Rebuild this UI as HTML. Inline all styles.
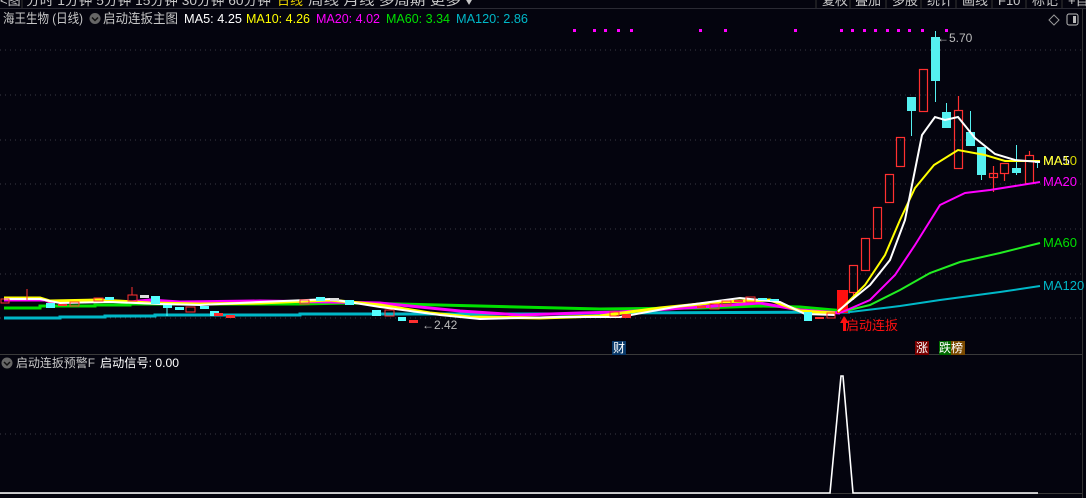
<!DOCTYPE html>
<html><head><meta charset="utf-8"><style>
html,body{margin:0;padding:0;background:#04040e;}
body{width:1086px;height:498px;overflow:hidden;position:relative;font-family:"Liberation Sans","Noto Sans CJK SC",sans-serif;}
</style></head><body>
<svg width="1086" height="498" style="position:absolute;left:0;top:0" xmlns="http://www.w3.org/2000/svg">
<g font-family="Liberation Sans, Noto Sans CJK SC, sans-serif">
<g font-size="13" fill="#c8c8c8">
<text x="0" y="5">&lt;图</text>
<text x="26" y="5" textLength="245" lengthAdjust="spacingAndGlyphs">分时  1分钟  5分钟  15分钟  30分钟  60分钟</text>
<text x="277" y="5" fill="#e8d000">日线</text>
<text x="308" y="5" textLength="165" lengthAdjust="spacingAndGlyphs">周线  月线  多周期  更多 ▾</text>
<text x="822" y="5">复权</text><text x="855" y="5">叠加</text><text x="892" y="5">多股</text><text x="927" y="5">统计</text><text x="962" y="5">画线</text><text x="998" y="5">F10</text><text x="1032" y="5">标记</text><text x="1068" y="5">+自</text>
</g>
<line x1="0" y1="8.5" x2="1086" y2="8.5" stroke="#2a2a33"/>
<g stroke="#333" stroke-width="1"><line x1="22" y1="0" x2="22" y2="8"/><line x1="816" y1="0" x2="816" y2="8"/><line x1="850" y1="0" x2="850" y2="8"/><line x1="886" y1="0" x2="886" y2="8"/><line x1="921" y1="0" x2="921" y2="8"/><line x1="956" y1="0" x2="956" y2="8"/><line x1="992" y1="0" x2="992" y2="8"/><line x1="1026" y1="0" x2="1026" y2="8"/><line x1="1062" y1="0" x2="1062" y2="8"/></g>
<g stroke="#3a3a44" stroke-dasharray="1,4">
<line x1="0" y1="50" x2="1082" y2="50"/><line x1="0" y1="95" x2="1082" y2="95"/><line x1="0" y1="140" x2="1082" y2="140"/><line x1="0" y1="184" x2="1082" y2="184"/><line x1="0" y1="229" x2="1082" y2="229"/><line x1="0" y1="274" x2="1082" y2="274"/><line x1="0" y1="318" x2="1082" y2="318"/><line x1="0" y1="434" x2="1082" y2="434"/>
</g>
<line x1="1082.5" y1="9" x2="1082.5" y2="498" stroke="#333"/>
<line x1="0" y1="354.5" x2="1082" y2="354.5" stroke="#3a3a3a"/>
<line x1="0" y1="493.5" x2="1082" y2="493.5" stroke="#3a3a3a"/>
<text x="3" y="23" font-size="13" fill="#c8c8c8" textLength="80" lengthAdjust="spacingAndGlyphs">海王生物 (日线)</text>
<circle cx="95" cy="18.5" r="5.5" fill="#666"/><path d="M92 17.5 L95 20.5 L98 17.5" stroke="#111" stroke-width="1.5" fill="none"/>
<text x="103" y="23" font-size="13" fill="#c8c8c8" textLength="75" lengthAdjust="spacingAndGlyphs">启动连扳主图</text>
<text x="184" y="23" font-size="13" fill="#ffffff" textLength="58" lengthAdjust="spacingAndGlyphs">MA5: 4.25</text>
<text x="246" y="23" font-size="13" fill="#ffff00" textLength="64" lengthAdjust="spacingAndGlyphs">MA10: 4.26</text>
<text x="316" y="23" font-size="13" fill="#ff00ff" textLength="64" lengthAdjust="spacingAndGlyphs">MA20: 4.02</text>
<text x="386" y="23" font-size="13" fill="#00e000" textLength="64" lengthAdjust="spacingAndGlyphs">MA60: 3.34</text>
<text x="456" y="23" font-size="13" fill="#00b8c8" textLength="72" lengthAdjust="spacingAndGlyphs">MA120: 2.86</text>
<path d="M1054 15 L1059 20 L1054 25 L1049 20 Z" stroke="#999" fill="none"/>
<rect x="1067" y="14" width="11" height="11" rx="2" stroke="#bbb" fill="none"/><rect x="1073" y="16" width="3" height="7" fill="#bbb"/>
<g fill="#ff00ff">
<rect x="573" y="29" width="3" height="3"/><rect x="593" y="29" width="3" height="3"/><rect x="604" y="29" width="3" height="3"/><rect x="617" y="29" width="3" height="3"/><rect x="630" y="29" width="3" height="3"/><rect x="699" y="29" width="3" height="3"/><rect x="724" y="29" width="3" height="3"/><rect x="794" y="29" width="3" height="3"/><rect x="840" y="29" width="3" height="3"/><rect x="851" y="29" width="3" height="3"/><rect x="863" y="29" width="3" height="3"/><rect x="874" y="29" width="3" height="3"/><rect x="886" y="29" width="3" height="3"/><rect x="897" y="29" width="3" height="3"/><rect x="908" y="29" width="3" height="3"/><rect x="921" y="29" width="3" height="3"/><rect x="945" y="29" width="3" height="3"/>
</g>
<g fill="none" stroke-width="3">
<path d="M4 318 L60 318 L60 317 L105 317 L105 316 L155 316 L155 315 L300 315 L300 314 L560 314 L600 313 L850 312" stroke="#00b8c8"/>
<path d="M4 308 L40 308 L40 306 L95 306 L95 305 L130 305 L130 304 L300 304 L350 303 L400 304 L600 309 L700 308 L760 306 L800 307 L845 311" stroke="#00e000"/>
<path d="M4 300 L45 300 L50 302 L100 300 L130 302 L150 300 L180 302 L260 301 L330 302 L380 303 L460 311 L520 315 L580 313 L620 312 L700 307 L760 303 L800 310 L840 313" stroke="#ff00ff"/>
<path d="M4 298 L40 298 L50 301 L100 300 L150 303 L200 304 L260 303 L330 300 L380 305 L430 313 L470 317 L540 318 L600 316 L660 308 L720 302 L770 300 L800 311 L835 313" stroke="#ffff00"/>
<path d="M4 299 L40 299 L60 303 L110 302 L160 304 L200 305 L260 302 L330 299 L380 307 L440 315 L480 319 L560 317 L620 317 L680 306 L740 298 L780 302 L805 314 L835 315" stroke="#ffffff" stroke-width="2"/>
</g>
<g stroke-width="1">
<rect x="1" y="299" width="8" height="4" fill="none" stroke="#ff3030"/>
<line x1="27" y1="289" x2="27" y2="300" stroke="#ff3030"/>
<rect x="46" y="303" width="9" height="5" fill="#5ff"/><rect x="58" y="304" width="9" height="2" fill="#ff3030"/>
<rect x="70" y="302" width="9" height="4" fill="none" stroke="#ff3030"/>
<rect x="94" y="298" width="9" height="3" fill="none" stroke="#ff3030"/>
<rect x="105" y="297" width="9" height="3" fill="#5ff"/>
<rect x="128" y="295" width="9" height="6" fill="none" stroke="#ff3030"/><line x1="132" y1="287" x2="132" y2="295" stroke="#ff3030"/>
<rect x="140" y="295" width="9" height="3" fill="#ddd"/>
<rect x="151" y="296" width="9" height="8" fill="#5ff"/>
<rect x="163" y="305" width="9" height="3" fill="#5ff"/><line x1="167" y1="305" x2="167" y2="316" stroke="#5ff"/>
<rect x="175" y="307" width="9" height="3" fill="#5ff"/>
<rect x="186" y="307" width="9" height="5" fill="none" stroke="#ff3030"/>
<rect x="200" y="306" width="9" height="3" fill="#5ff"/>
<rect x="210" y="311" width="9" height="5" fill="#5ff"/>
<rect x="214" y="313" width="9" height="3" fill="#ff3030"/>
<rect x="226" y="315" width="9" height="3" fill="#ff3030"/>
<rect x="300" y="300" width="9" height="4" fill="none" stroke="#ff3030"/>
<rect x="316" y="297" width="9" height="4" fill="#5ff"/>
<rect x="330" y="298" width="9" height="3" fill="#ddd"/>
<rect x="345" y="300" width="9" height="5" fill="#5ff"/>
<rect x="372" y="310" width="9" height="6" fill="#5ff"/>
<rect x="385" y="310" width="9" height="6" fill="none" stroke="#ff3030"/>
<rect x="398" y="317" width="8" height="4" fill="#5ff"/>
<rect x="409" y="320" width="9" height="3" fill="#ff3030"/>
<text x="422" y="329" font-size="12" fill="#bbb">←2.42</text>
<rect x="610" y="312" width="9" height="4" fill="none" stroke="#ff3030"/>
<rect x="622" y="314" width="9" height="4" fill="#ff3030"/>
<rect x="697" y="306" width="9" height="2" fill="#ff3030"/>
<rect x="710" y="304" width="9" height="5" fill="none" stroke="#ff3030"/>
<rect x="722" y="301" width="9" height="4" fill="none" stroke="#ff3030"/>
<rect x="734" y="300" width="9" height="2" fill="#ff3030"/>
<rect x="746" y="297" width="9" height="5" fill="none" stroke="#ff3030"/>
<rect x="758" y="298" width="9" height="2" fill="#5ff"/>
<rect x="770" y="299" width="9" height="2" fill="#5ff"/>
<rect x="804" y="312" width="8" height="9" fill="#5ff"/>
<rect x="815" y="317" width="9" height="2" fill="#ff3030"/>
<rect x="827" y="313" width="8" height="5" fill="none" stroke="#ff3030"/>
</g>
<g stroke="#ff3030" fill="none" stroke-width="1.2">
<rect x="837" y="290" width="11" height="23" fill="#ff1010" stroke="none"/>
<rect x="849.5" y="265.5" width="8" height="27"/><line x1="853.5" y1="292" x2="853.5" y2="300"/>
<rect x="861.5" y="238.5" width="8" height="32"/>
<rect x="873.5" y="207.5" width="8" height="31"/>
<rect x="885.5" y="174.5" width="8" height="28"/>
<rect x="896.5" y="137.5" width="8" height="29"/>
<rect x="919.5" y="69.5" width="8" height="42"/>
<rect x="954.5" y="110.5" width="8" height="58"/><line x1="958.5" y1="96" x2="958.5" y2="110"/>
<rect x="989.5" y="173.5" width="8" height="4"/><line x1="993.5" y1="166" x2="993.5" y2="192"/>
<rect x="1000.5" y="163.5" width="8" height="10"/><line x1="1004.5" y1="173" x2="1004.5" y2="181"/>
<rect x="1025.5" y="155.5" width="8" height="28"/><line x1="1029.5" y1="151" x2="1029.5" y2="155"/>
</g>
<g fill="#55f0f0" stroke="#55f0f0">
<rect x="907" y="97" width="9" height="14" stroke="none"/><line x1="911.5" y1="111" x2="911.5" y2="136"/>
<rect x="931" y="37" width="9" height="44" stroke="none"/><line x1="935.5" y1="31" x2="935.5" y2="102"/>
<rect x="942" y="112" width="9" height="16" stroke="none"/><line x1="946.5" y1="103" x2="946.5" y2="112"/>
<rect x="966" y="132" width="9" height="14" stroke="none"/><line x1="970.5" y1="111" x2="970.5" y2="132"/>
<rect x="977" y="147" width="9" height="28" stroke="none"/><line x1="981.5" y1="175" x2="981.5" y2="180"/>
<rect x="1012" y="168" width="9" height="5" stroke="none"/><line x1="1016.5" y1="145" x2="1016.5" y2="175"/>
<line x1="1035" y1="162.5" x2="1040" y2="162.5"/><line x1="1037.5" y1="160" x2="1037.5" y2="168"/>
</g>
<text x="937" y="42" font-size="12" fill="#bbb">←5.70</text>
<g fill="none" stroke-width="2">
<path d="M850 312 L900 306 L940 300 L1000 292 L1040 286" stroke="#00b8c8"/>
<path d="M845 311 L870 305 L900 290 L930 273 L960 262 L1000 253 L1040 243" stroke="#22ee22"/>
<path d="M840 313 L870 300 L895 275 L915 245 L940 205 L965 193 L990 190 L1040 182" stroke="#ff00ff"/>
<path d="M838 312 L865 285 L885 255 L900 220 L915 188 L934 165 L958 150 L985 155 L1005 161 L1040 161" stroke="#ffff00"/>
<path d="M838 311 L870 285 L890 260 L905 220 L915 170 L922 135 L935 117 L945 120 L958 117 L975 138 L995 154 L1015 160 L1040 162" stroke="#ffffff"/>
</g>
<g font-size="13">
<text x="1043" y="165" fill="#ffffff">MA5</text>
<text x="1043" y="165" fill="#ffff00" opacity="0.85">MA10</text>
<text x="1043" y="186" fill="#ff00ff">MA20</text>
<text x="1043" y="247" fill="#00e000">MA60</text>
<text x="1043" y="290" fill="#00b8c8">MA120</text>
</g>
<path d="M844 316 L840 323 L843 323 L843 331 L846 331 L846 323 L849 323 Z" fill="#ff1010"/>
<text x="846" y="330" font-size="13" fill="#ff1010">启动连扳</text>
<rect x="612" y="341" width="14" height="14" fill="#0a3a6a"/><text x="613" y="352" font-size="12" fill="#fff">财</text>
<rect x="915" y="341" width="14" height="14" fill="#7a0000"/><text x="916" y="352" font-size="12" fill="#fff">涨</text>
<rect x="939" y="341" width="12" height="14" fill="#006a00"/><rect x="951" y="341" width="14" height="14" fill="#7a4a00"/><text x="939" y="352" font-size="12" fill="#fff">跌榜</text>
<circle cx="7" cy="363" r="5.5" fill="#666"/><path d="M4 362 L7 365 L10 362" stroke="#111" stroke-width="1.5" fill="none"/>
<text x="16" y="367" font-size="12" fill="#c8c8c8" textLength="79" lengthAdjust="spacingAndGlyphs">启动连扳预警F</text>
<text x="100" y="367" font-size="12" fill="#ffffff" textLength="79" lengthAdjust="spacingAndGlyphs">启动信号: 0.00</text>
<path d="M0 493 L830 493 L841 376 L843 376 L853 493 L1038 493" stroke="#ffffff" stroke-width="1.6" fill="none"/>
</g>
</svg>
</body></html>
